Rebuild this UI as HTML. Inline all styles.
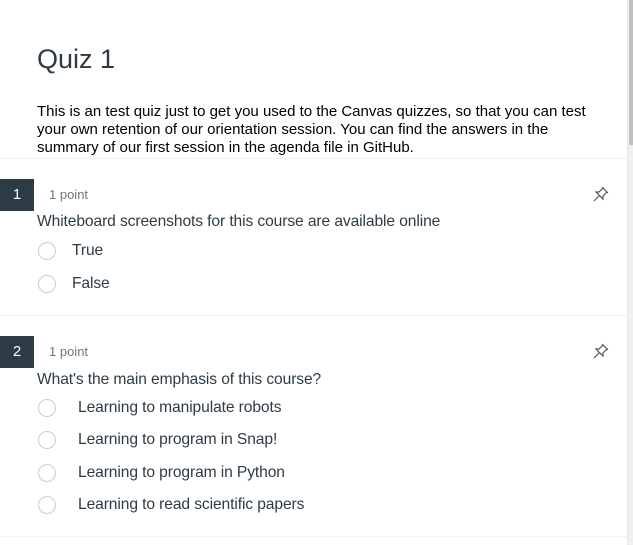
<!DOCTYPE html>
<html><head><style>
body{margin:0;width:633px;height:545px;background:#fff;position:relative;overflow:hidden;font-family:"Liberation Sans",sans-serif;color:#2d3b45}
.a{position:absolute;white-space:nowrap}
.num{position:absolute;left:0;width:34px;height:32px;background:#2d3b45;color:#fff;font-size:15px;line-height:32px;text-align:center}
.pt{font-size:13px;color:#6b7780}
.q{font-size:15.6px;letter-spacing:-0.1px}
.r{position:absolute;left:38px;width:18px;height:18px;border:1px solid #c7cdd1;border-radius:50%;box-sizing:border-box}
.o{font-size:15.6px;letter-spacing:-0.1px}
.hr{position:absolute;left:0;width:628px;height:1px;background:#eef0f1}
.pin{position:absolute;left:592px}
</style></head><body>
<div class="a" style="left:37px;top:44px;font-size:27px;color:#2d3b45">Quiz 1</div>
<div class="a" style="left:37px;top:103px;font-size:15px;line-height:18px;color:#000;white-space:normal;width:560px">This is an test quiz just to get you used to the Canvas quizzes, so that you can test your own retention of our orientation session. You can find the answers in the summary of our first session in the agenda file in GitHub.</div>
<div class="hr" style="top:158px"></div>
<div class="num" style="top:179px">1</div>
<div class="a pt" style="left:49px;top:187px">1 point</div>
<svg class="pin" style="top:185px" width="18" height="18" viewBox="0 0 18 18" fill="none" stroke="#4a5660" stroke-width="1.2"><path d="M10 2l6 6M11 3l-4 4-3 0 7 7 0-3 4-4M7.5 10.5L2 16"/></svg>
<div class="a q" style="left:37px;top:213px">Whiteboard screenshots for this course are available online</div>
<div class="r" style="top:242px"></div><div class="a o" style="left:72px;top:242px">True</div>
<div class="r" style="top:275px"></div><div class="a o" style="left:72px;top:275px">False</div>
<div class="hr" style="top:315px"></div>
<div class="num" style="top:336px">2</div>
<div class="a pt" style="left:49px;top:344px">1 point</div>
<svg class="pin" style="top:342px" width="18" height="18" viewBox="0 0 18 18" fill="none" stroke="#4a5660" stroke-width="1.2"><path d="M10 2l6 6M11 3l-4 4-3 0 7 7 0-3 4-4M7.5 10.5L2 16"/></svg>
<div class="a q" style="left:37px;top:371px">What's the main emphasis of this course?</div>
<div class="r" style="top:399px"></div><div class="a o" style="left:78px;top:399px">Learning to manipulate robots</div>
<div class="r" style="top:431px"></div><div class="a o" style="left:78px;top:431px">Learning to program in Snap!</div>
<div class="r" style="top:464px"></div><div class="a o" style="left:78px;top:464px">Learning to program in Python</div>
<div class="r" style="top:496px"></div><div class="a o" style="left:78px;top:496px">Learning to read scientific papers</div>
<div class="hr" style="top:536px"></div>
<div style="position:absolute;left:627px;top:0;width:1px;height:545px;background:#e6e8ea"></div>
<div style="position:absolute;left:628px;top:0;width:5px;height:545px;background:#f0f0f0"></div>
<div style="position:absolute;left:629px;top:0;width:4px;height:145px;background:#c1c1c1"></div>
</body></html>
